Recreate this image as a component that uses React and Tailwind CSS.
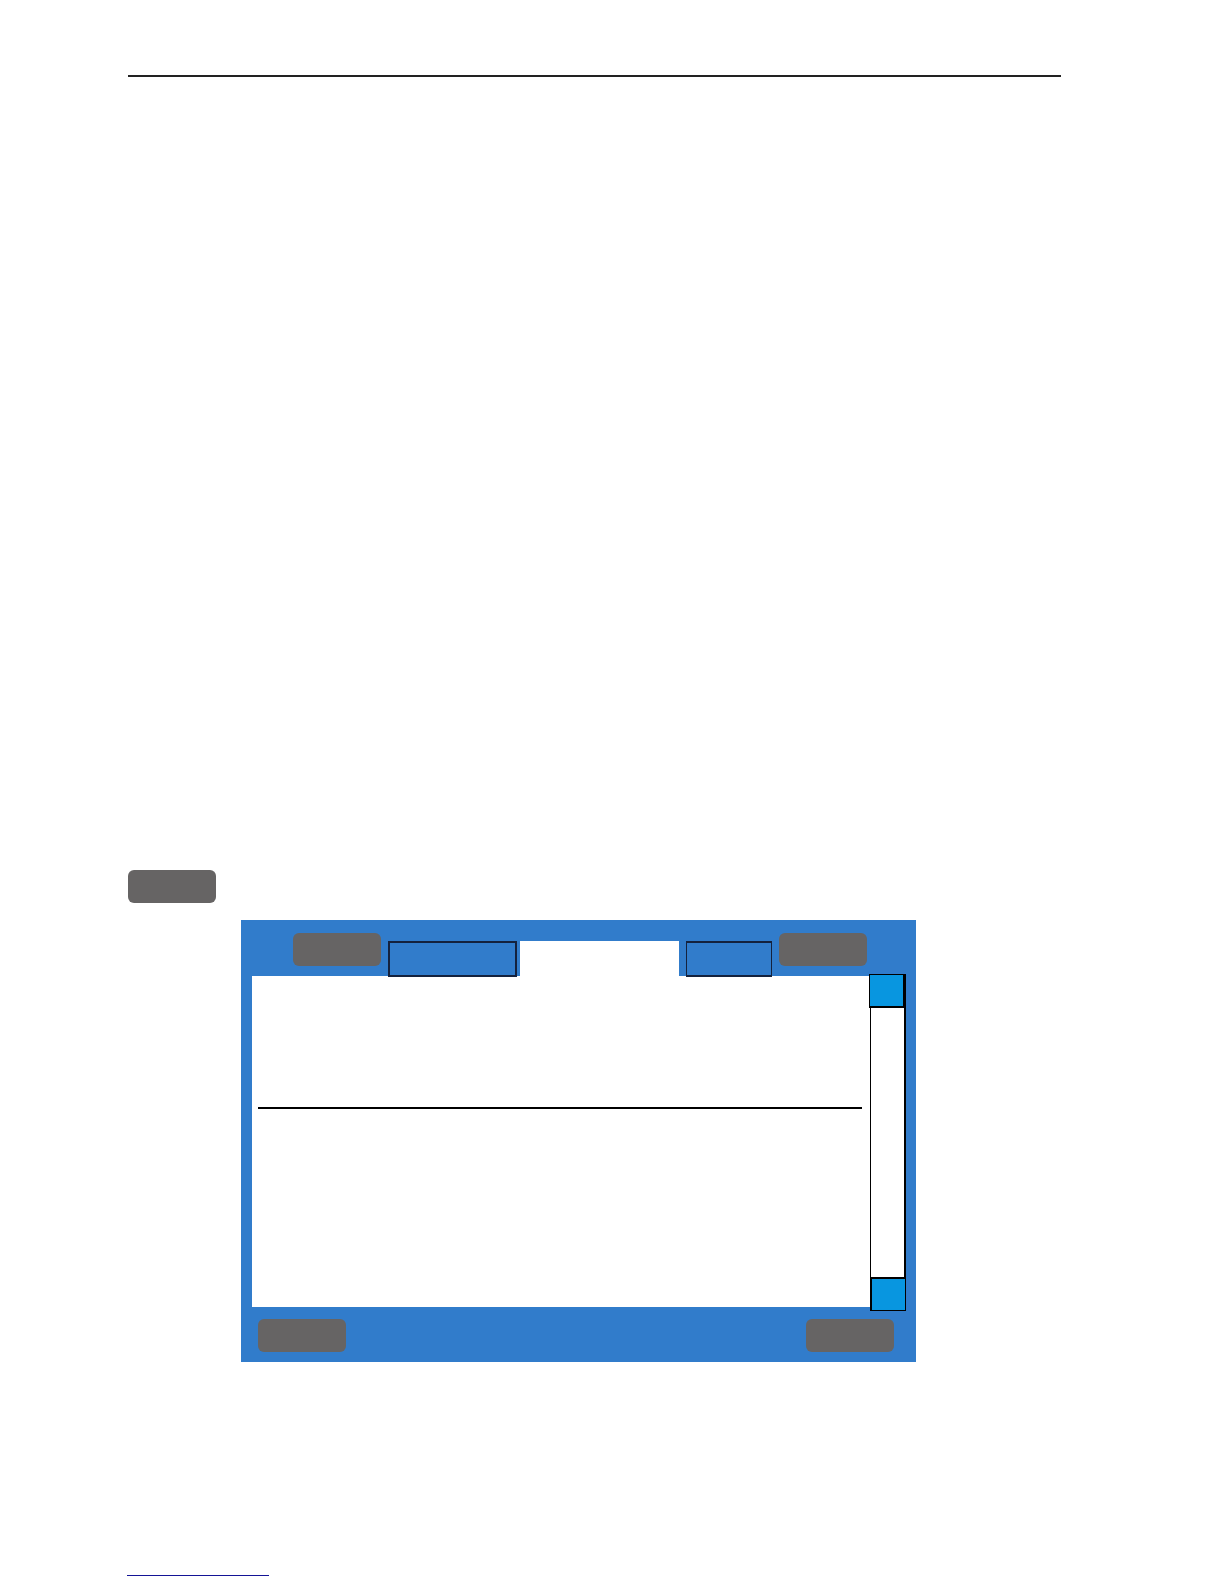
const KEY = "h-[33px] w-[88px] shrink-0 rounded-md bg-[#666464]";

function ScrollBar() {
  return (
    <div className="-mt-0.5 -mb-1 flex w-9 shrink-0 flex-col">
      <div className="border-r border-black bg-[#317ccb]">
        <button
          type="button"
          aria-label="Scroll up"
          className="relative -ml-px block h-[34px] w-9 border-t border-r-2 border-b-2 border-l border-black bg-[#0896e0]"
        />
      </div>
      <div className="flex-1 border-r-2 border-l border-black bg-white" />
      <button
        type="button"
        aria-label="Scroll down"
        className="h-[34px] w-9 border-t-2 border-r border-b border-l-2 border-black bg-[#0896e0]"
      />
    </div>
  );
}

function DevicePanel() {
  return (
    <section aria-label="Display" className="mt-[17px] mr-[145px] ml-[113px] bg-[#317ccb]">
      <header className="flex h-14 items-end pr-[49px] pl-[52px]">
        <button type="button" aria-label="Previous tab" className={`${KEY} mb-2.5`} />
        <button
          type="button"
          aria-label="First tab"
          className="relative -mb-px ml-[7px] h-9 w-[129px] shrink-0 border-2 border-[#14223e]"
        />
        <button type="button" aria-label="Current tab" className="ml-[3px] h-[35px] flex-1 bg-white" />
        <button
          type="button"
          aria-label="Last tab"
          className="relative -mb-px ml-[7px] h-9 w-[86px] shrink-0 border-x border-y-2 border-[#14223e]"
        />
        <button type="button" aria-label="Next tab" className={`${KEY} mb-2.5 ml-[7px]`} />
      </header>
      <div className="mr-2.5 ml-[11px] flex h-[331px]">
        <div className="flex-1 bg-white pt-[131px] pr-2 pl-1.5">
          <hr className="border-t-2 border-black" />
        </div>
        <ScrollBar />
      </div>
      <footer className="flex h-[55px] justify-between pt-3 pr-[22px] pl-[17px]">
        <button type="button" aria-label="Left soft key" className={KEY} />
        <button type="button" aria-label="Right soft key" className={KEY} />
      </footer>
    </section>
  );
}

export default function App() {
  return (
    <main className="flex min-h-screen flex-col bg-white pt-[75px] pr-[163px] pb-2 pl-32 font-['Liberation_Sans',sans-serif]">
      <hr className="border-t-2 border-[#222222]" />
      <div className="mt-[793px]">
        <button type="button" aria-label="Key" className={`${KEY} block`} />
      </div>
      <DevicePanel />
      <a
        href="#top"
        aria-label="Back to top"
        className="mt-auto -ml-px h-5 w-[142px] border-b border-[#141496]"
      />
    </main>
  );
}
